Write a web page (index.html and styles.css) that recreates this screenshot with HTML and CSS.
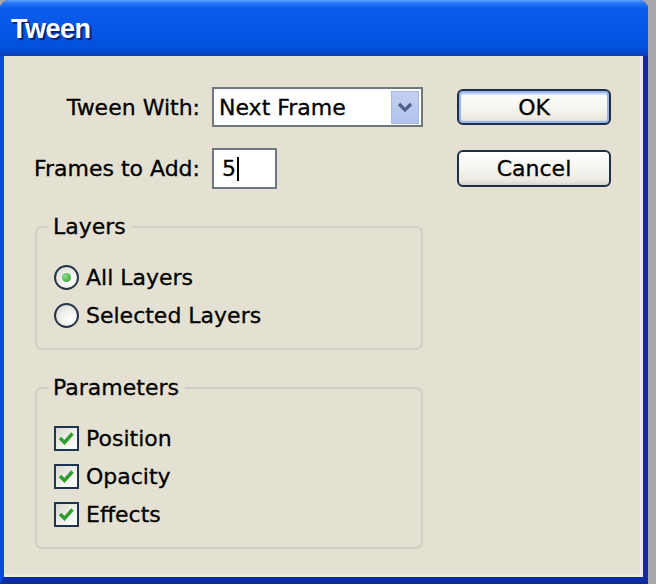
FILE: index.html
```html
<!DOCTYPE html>
<html>
<head>
<meta charset="utf-8">
<title>Tween</title>
<link rel="stylesheet" href="styles.css">
</head>
<body>
<div class="window">
  <div class="titlebar"><span class="title">Tween</span></div>
  <div class="client">
    <div class="left">
      <div class="form">
        <label class="lbl">Tween With:</label>
        <div class="select">
          <span class="select-text">Next Frame</span>
          <span class="select-btn">
            <svg width="16" height="12" viewBox="0 0 16 12"><path d="M2 3 L8 9 L14 3" fill="none" stroke="#4C5F86" stroke-width="3.2"/></svg>
          </span>
        </div>
        <label class="lbl">Frames to Add:</label>
        <div class="input"><span>5</span><span class="caret"></span></div>
      </div>

      <fieldset class="group">
        <legend>Layers</legend>
        <div class="opt"><span class="radio on"><span class="dot"></span></span><span>All Layers</span></div>
        <div class="opt"><span class="radio"></span><span>Selected Layers</span></div>
      </fieldset>

      <fieldset class="group">
        <legend>Parameters</legend>
        <div class="opt"><span class="check"><svg width="21" height="21" viewBox="0 0 21 21"><path d="M4 10 L8.5 14.5 L16.5 5.5" fill="none" stroke="#2E9E2E" stroke-width="3.4"/></svg></span><span>Position</span></div>
        <div class="opt"><span class="check"><svg width="21" height="21" viewBox="0 0 21 21"><path d="M4 10 L8.5 14.5 L16.5 5.5" fill="none" stroke="#2E9E2E" stroke-width="3.4"/></svg></span><span>Opacity</span></div>
        <div class="opt"><span class="check"><svg width="21" height="21" viewBox="0 0 21 21"><path d="M4 10 L8.5 14.5 L16.5 5.5" fill="none" stroke="#2E9E2E" stroke-width="3.4"/></svg></span><span>Effects</span></div>
      </fieldset>
    </div>

    <div class="right">
      <button class="btn default">OK</button>
      <button class="btn">Cancel</button>
    </div>
  </div>
</div>
</body>
</html>
```

FILE: styles.css
```css
html, body {
  margin: 0;
  padding: 0;
}
body {
  width: 656px;
  height: 584px;
  background: #A8A8AE;
  overflow: hidden;
  font-family: "DejaVu Sans", Verdana, sans-serif;
  font-size: 22px;
  color: #000;
  -webkit-text-stroke: 0.3px #000;
}
.window {
  width: 648px;
  height: 584px;
  display: flex;
  flex-direction: column;
  border-radius: 9px 9px 0 0;
  overflow: hidden;
  background: #0A46D8;
}
.titlebar {
  height: 56px;
  flex: none;
  box-sizing: border-box;
  padding: 14px 0 0 11px;
  background: linear-gradient(to bottom, #5FA2FF 0px, #2A7AF8 3px, #0B5DEC 8px, #0656E6 30px, #0250DD 48px, #0A45C8 53px, #0B3CAE 56px);
}
.title {
  font-family: "Liberation Sans", Arial, sans-serif;
  font-weight: bold;
  font-size: 27px;
  color: #FFFFFF;
  -webkit-text-stroke: 0;
  text-shadow: 2px 2px 1px #0A1E78;
  letter-spacing: -0.5px;
}
.client {
  flex: 1;
  display: grid;
  grid-template-columns: 388px 154px;
  column-gap: 34px;
  align-items: start;
  padding: 31px 0 0 31px;
  background: #E4E1D2;
  border-left: 4px solid #0B49DA;
  border-right: 5px solid #13299C;
  border-bottom: 7px solid #0B2BA2;
  box-shadow: inset -3px -3px 0 #ECEBE2;
}
.left {
  display: flex;
  flex-direction: column;
}
.form {
  display: grid;
  grid-template-columns: 165px 211px;
  column-gap: 12px;
  row-gap: 21px;
  align-items: center;
}
.lbl {
  justify-self: end;
  white-space: nowrap;
}
.select {
  height: 40px;
  box-sizing: border-box;
  border: 2px solid #6E7784;
  background: #FFFFFF;
  display: flex;
  align-items: center;
}
.select-text {
  flex: 1;
  padding-left: 5px;
}
.select-btn {
  width: 28px;
  height: 33px;
  margin-right: 2px;
  background: linear-gradient(to bottom, #C2D0F0, #B2C3EC);
  border: 1px solid #A9B9E2;
  box-sizing: border-box;
  display: flex;
  align-items: center;
  justify-content: center;
}
.input {
  width: 65px;
  height: 41px;
  box-sizing: border-box;
  border: 2px solid #6E7784;
  background: #FFFFFF;
  display: flex;
  align-items: center;
  padding-left: 8px;
}
.caret {
  width: 2px;
  height: 24px;
  background: #000;
  margin-left: 1px;
}
.group {
  margin: 25px 0 0 0;
  padding: 0 0 14px 17px;
  border: 2px solid #D2D0C2;
  border-radius: 7px;
  min-width: 0;
}
.group legend {
  padding: 0 6px 0 4px;
  margin-left: -5px;
  line-height: 26px;
}
.group legend + .opt {
  margin-top: 18px;
}
.opt {
  height: 38px;
  display: flex;
  align-items: center;
  gap: 7px;
}
.radio {
  width: 25px;
  height: 25px;
  box-sizing: border-box;
  border-radius: 50%;
  border: 2px solid #26354A;
  background: radial-gradient(circle at 70% 70%, #FFFFFF 0%, #F2F2EE 40%, #D6D6CF 100%);
  display: flex;
  align-items: center;
  justify-content: center;
}
.dot {
  width: 9px;
  height: 9px;
  border-radius: 50%;
  background: radial-gradient(circle at 35% 35%, #8EE08A, #2C9A2C);
}
.check {
  width: 25px;
  height: 25px;
  box-sizing: border-box;
  border: 2px solid #1E3550;
  background: linear-gradient(135deg, #D8D8D0 0%, #F2F2EC 60%, #FFFFFF 100%);
  display: flex;
  align-items: center;
  justify-content: center;
}
.right {
  display: flex;
  flex-direction: column;
  gap: 25px;
  margin-top: 2px;
}
.btn {
  font-family: "DejaVu Sans", Verdana, sans-serif;
  font-size: 22px;
  color: #000;
  -webkit-text-stroke: 0.3px #000;
  width: 154px;
  height: 37px;
  border: 2px solid #1D2F48;
  border-radius: 6px;
  background: linear-gradient(to bottom, #FFFFFF 0%, #F6F5F0 50%, #ECEAE2 85%, #D9D5CA 100%);
  padding: 0;
  margin: 0;
}
.btn.default {
  height: 36px;
  box-shadow: inset 0 0 0 2px #98B4E8, inset 0 2px 0 2px #CDE0FA;
}
```
